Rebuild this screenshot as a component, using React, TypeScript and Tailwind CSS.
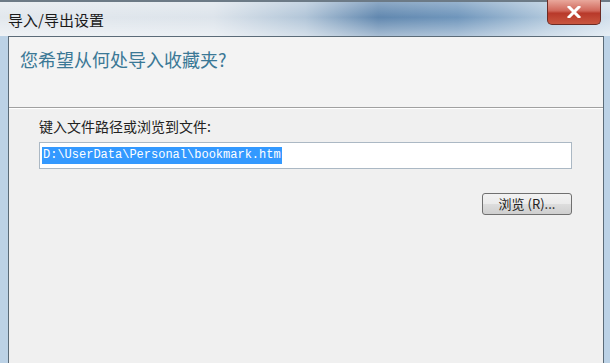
import React from 'react';

const CloseIcon = () => (
  <svg width="14" height="12" viewBox="0 0 14 12">
    <path d="M2 1 L12 11 M12 1 L2 11" stroke="#fff" strokeWidth="3" strokeLinecap="square" />
  </svg>
);

const App = () => {
  return (
    <div className="flex h-[363px] w-[610px] flex-col overflow-hidden bg-[#bcd2e6] font-['Noto_Sans_CJK_SC',sans-serif]">
      {/* Aero title bar */}
      <div className="relative flex h-[36px] items-start border-t-[2px] border-[#6c7a86] bg-[linear-gradient(90deg,#dfe5eb_0%,#d9e1e9_35%,#a9bfd4_50%,#4f7aa6_62%,#5f8ab4_75%,#a7c1d8_90%,#cddcea_100%)]">
        <div className="absolute inset-0 bg-[linear-gradient(180deg,rgba(255,255,255,0.35)_0%,rgba(255,255,255,0.1)_45%,rgba(255,255,255,0.5)_100%)]" />
        <span className="relative ml-[8px] mt-[8px] text-[15px] leading-[20px] text-[#1a1a1a]">导入/导出设置</span>
        <div className="relative ml-auto mr-[9px] mt-[-2px] flex h-[25px] w-[54px] items-center justify-center rounded-b-[5px] border border-t-0 border-[#6b2b24] bg-[linear-gradient(180deg,#e9a89c_0%,#d0675a_45%,#b8392a_55%,#c9563f_100%)]">
          <CloseIcon />
        </div>
      </div>

      {/* Client area */}
      <div className="ml-[8px] mr-[6px] flex flex-1 flex-col border-l border-r border-t border-[#5b6b78] bg-[#f0f0f0]">
        <div className="flex h-[71px] flex-col border-b border-[#a0a0a0] bg-[#f3f3f3] pl-[11px] pt-[9px]">
          <span className="text-[18px] leading-[26px] text-[#3b7896]">您希望从何处导入收藏夹?</span>
        </div>
        <div className="flex flex-col border-t border-[#ffffff] pl-[30px] pr-[31px] pt-[7px]">
          <span className="text-[14px] leading-[20px] text-[#222]">键入文件路径或浏览到文件:</span>
          <div className="mt-[6px] flex h-[27px] items-center border border-[#abb8c4] bg-white pl-[2px]">
            <span className="bg-[#3399ff] px-[1px] font-['Liberation_Mono',monospace] text-[12px] leading-[17px] text-white">
              D:\UserData\Personal\bookmark.htm
            </span>
          </div>
          <div className="mt-[24px] flex justify-end">
            <div className="flex h-[22px] w-[90px] items-center justify-center rounded-[3px] border border-[#707070] bg-[linear-gradient(180deg,#f2f2f2_0%,#ebebeb_50%,#dddddd_51%,#cfcfcf_100%)] text-[13px] leading-[18px] text-[#222]">
              浏览 (R)...
            </div>
          </div>
        </div>
      </div>
    </div>
  );
};

export default App;
